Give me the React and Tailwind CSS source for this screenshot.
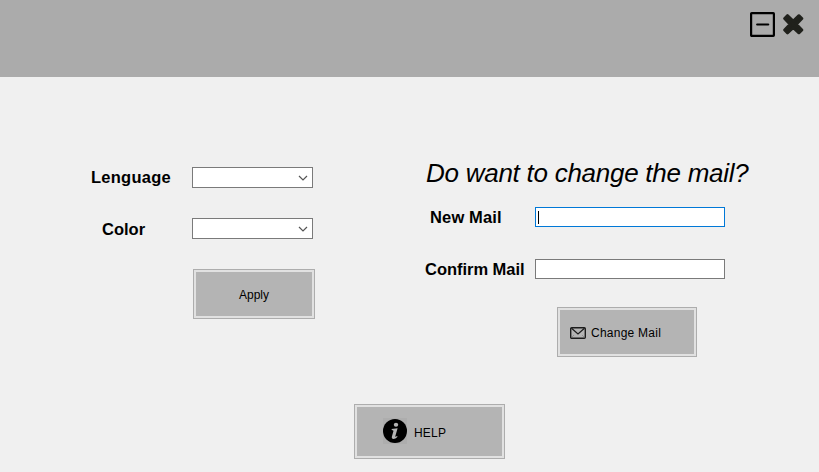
function Label({ children, className }) {
  return (
    <label className={`block whitespace-nowrap text-[16.5px] leading-[20px] font-bold ${className}`}>
      {children}
    </label>
  );
}

function Select() {
  return (
    <div className="flex h-[21px] w-[121px] items-center justify-end border border-[#7a7a7a] bg-white pr-[4px]">
      <svg width="10" height="6" viewBox="0 0 10 6" fill="none" stroke="#555" strokeWidth="1.2">
        <path d="M1 1l4 4 4-4" />
      </svg>
    </div>
  );
}

function Button({ children, className }) {
  return (
    <button className={`flex items-center border border-[#adadad] bg-[#e1e1e1] p-[2px] text-[12px] ${className}`}>
      {children}
    </button>
  );
}

export default function App() {
  return (
    <div className="h-[472px] w-[819px] overflow-hidden bg-[#f0f0f0] font-['Liberation_Sans',Arial,sans-serif] text-black">
      <header className="flex h-[77px] items-start justify-end gap-[8px] bg-[#ababab] pt-[12px] pr-[15px]">
        <svg width="25" height="25" viewBox="0 0 25 25" fill="none" stroke="#000">
          <rect x="1.1" y="1.1" width="22.8" height="22.8" rx="0.6" strokeWidth="2.2" />
          <path d="M7.2 12.5h11" strokeWidth="2.2" strokeLinecap="round" />
        </svg>
        <svg className="mt-[2px]" width="21" height="21" viewBox="0 0 21 21">
          <path
            d="M4.5 1.6 10.2 7 15.9 1.6 18.9 4.5 13.4 10.3 18.9 16 15.9 18.9 10.2 13.6 4.5 18.9 1.6 16 7 10.3 1.6 4.5Z"
            fill="#20211c"
            stroke="#20211c"
            strokeWidth="2.8"
            strokeLinejoin="round"
          />
        </svg>
      </header>

      <main>
        <div className="flex h-[280px]">
          <section className="w-[425px] pt-[90px]">
            <div className="flex h-[21px] items-center">
              <Label className="w-[192px] pb-[2px] pl-[91px] tracking-[0.25px]">Lenguage</Label>
              <Select />
            </div>
            <div className="mt-[30px] flex h-[21px] items-center">
              <Label className="w-[192px] pl-[102px]">Color</Label>
              <Select />
            </div>
            <Button className="mt-[30px] ml-[193px] h-[50px] w-[122px]">
              <span className="flex h-full w-full items-center justify-center bg-[#b4b4b4] pt-[2px]">Apply</span>
            </Button>
          </section>

          <section className="pt-[80px]">
            <h1 className="h-[32px] pl-[1px] text-[26px] leading-[32px] tracking-[-0.26px] whitespace-nowrap italic">
              Do want to change the mail?
            </h1>
            <div className="mt-[18px] flex h-[20px] items-center">
              <Label className="w-[110px] pl-[5px] tracking-[0.15px]">New Mail</Label>
              <div className="flex h-[20px] w-[190px] items-center border border-[#0078d7] bg-white pl-[2px]">
                <span className="h-[13px] w-px bg-black" />
              </div>
            </div>
            <div className="mt-[32px] flex h-[20px] items-center">
              <Label className="w-[110px] tracking-[-0.03px]">Confirm Mail</Label>
              <div className="h-[20px] w-[190px] border border-[#7a7a7a] bg-white" />
            </div>
            <Button className="mt-[28px] ml-[132px] h-[50px] w-[140px]">
              <span className="flex h-full w-full items-center gap-[5px] bg-[#b4b4b4] pt-[2px] pl-[10px]">
                <svg width="16" height="12" viewBox="0 0 16 12" fill="none" stroke="#1c1c1c" strokeWidth="1.4">
                  <rect x="0.7" y="0.7" width="14.6" height="10.6" rx="1" />
                  <path d="M1.5 1.2 8 7l6.5-5.8" strokeWidth="1.2" />
                  <path d="M1.5 10.5 4 8M14.5 10.5 12 8" strokeWidth="0.6" stroke="#777" />
                </svg>
                <span className="tracking-[0.25px] whitespace-nowrap">Change Mail</span>
              </span>
            </Button>
          </section>
        </div>

        <Button className="mt-[47px] ml-[354px] h-[55px] w-[151px]">
          <span className="flex h-full w-full items-center bg-[#b4b4b4] pl-[26px]">
            <span className="mb-[1px] flex h-[26px] w-[24px] items-start bg-[#adadad]">
              <svg className="mt-[1px]" width="24" height="24" viewBox="0 0 24 24">
                <circle cx="12" cy="12" r="12" fill="#000" />
                <ellipse cx="13" cy="5.8" rx="2.2" ry="2" fill="#b4b4b4" />
                <path
                  d="M8.6 10l6-.8-2.3 8c-.2.8.3.8 1.8-.2l.4.7c-1.4 1.5-2.8 2.2-4 2.2-1.4 0-2-.9-1.6-2.3l1.5-5.4c.2-.8-.3-1.1-1.6-1.3z"
                  fill="#b4b4b4"
                />
              </svg>
            </span>
            <span className="ml-[7px] pt-[2px] tracking-[0.2px]">HELP</span>
          </span>
        </Button>
      </main>
    </div>
  );
}
